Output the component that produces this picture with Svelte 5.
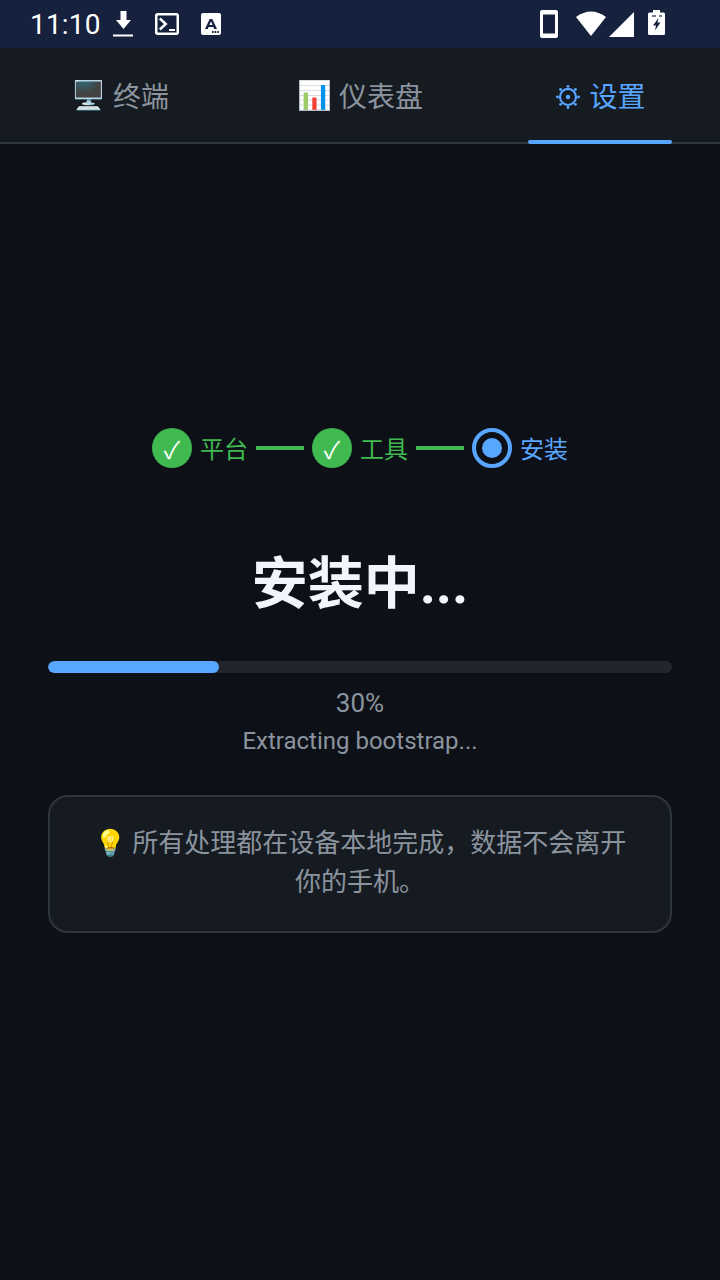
<script>
	const tabs = [
		{ icon: '🖥️', label: '终端' },
		{ icon: '📊', label: '仪表盘' },
		{ label: '设置', active: true }
	];
	const steps = [
		{ label: '平台', state: 'done' },
		{ label: '工具', state: 'done' },
		{ label: '安装', state: 'current' }
	];
	let progress = 30;
	let barWidth = 27.4;
	// knobs round the gear
	const knobs = [0, 1, 2, 3, 4, 5, 6, 7].map((i) => {
		const a = (i * Math.PI) / 4;
		return { x: 14.5 + 10.9 * Math.cos(a), y: 18 + 10.9 * Math.sin(a) };
	});
</script>

<div class="screen">
	<div class="statusbar">
		<span class="time">11:10</span>
		<svg class="ic download" width="20" height="26" viewBox="0 0 20 26">
			<path fill="#fff" d="M7.500 0h6v9h4.500l-7.500 9-7.500-9h4.500z" />
			<rect x="0" y="23.500" width="20" height="2" fill="#fff" />
		</svg>
		<svg class="ic terminal" width="24" height="22" viewBox="0 0 24 22">
			<rect x="1.250" y="1.250" width="21.500" height="19.500" rx="1.500" fill="none" stroke="#fff" stroke-width="2.500" />
			<path d="M4.800 5.500l6 5.500-6 5.500" fill="none" stroke="#fff" stroke-width="2.400" />
			<rect x="14" y="16" width="6" height="2" fill="#fff" />
		</svg>
		<svg class="ic keyboard" width="20" height="22" viewBox="0 0 20 22">
			<path fill="#fff" d="M2 0h16a2 2 0 0 1 2 2v18a2 2 0 0 1-2 2H2a2 2 0 0 1-2-2V2a2 2 0 0 1 2-2z" />
			<path fill="#16213e" d="M4 16L8.700 6h2.600L16 16h-2.800l-.8-2H7.600l-.8 2zM8.400 12h3.200L10 8.200z" />
			<rect x="11" y="18" width="1.600" height="2" fill="#16213e" />
			<rect x="13.600" y="18" width="1.600" height="2" fill="#16213e" />
			<rect x="16.200" y="18" width="1.600" height="2" fill="#16213e" />
		</svg>
		<div class="spacer"></div>
		<svg class="ic" width="18" height="28" viewBox="0 0 18 28">
			<path fill="#fff" fill-rule="evenodd" d="M2 0h14a2 2 0 0 1 2 2v24a2 2 0 0 1-2 2H2a2 2 0 0 1-2-2V2a2 2 0 0 1 2-2zM3 4.500v19h12v-19z" />
		</svg>
		<svg class="ic wifi" width="30" height="28" viewBox="0 0 30 28">
			<path d="M0 7Q15-4 30 7L15 26z" fill="#fff" />
		</svg>
		<svg class="ic signal" width="25" height="28" viewBox="0 0 25 28">
			<path d="M25 2v25H0z" fill="#fff" />
		</svg>
		<svg class="ic battery" width="17" height="28" viewBox="0 0 17 28">
			<path fill="#fff" d="M5 0h7v2.500h3.500a1.500 1.500 0 0 1 1.500 1.500v19.500a1.500 1.500 0 0 1-1.500 1.500H1.500A1.500 1.500 0 0 1 0 23.500V4a1.500 1.500 0 0 1 1.500-1.500H5z" />
			<rect x="4" y="5" width="4" height="2" fill="#16213e" opacity="0.6" />
			<rect x="11" y="5" width="3" height="2" fill="#16213e" opacity="0.6" />
			<path d="M10.500 8L5 15.500h3l-1 5 5.500-8h-3z" fill="#16213e" />
		</svg>
	</div>

	<nav class="tabs">
		{#each tabs as tab}
			<div class="tab" class:active={tab.active}>
				{#if tab.icon}
					<span>{tab.icon}</span>
				{:else}
					<svg width="28" height="32" viewBox="0 0 29 32">
						<circle cx="14.500" cy="18" r="8.300" fill="none" stroke="#58a6ff" stroke-width="2.200" />
						<circle cx="14.500" cy="18" r="2.300" fill="#58a6ff" />
						{#each knobs as k}
							<circle cx={k.x} cy={k.y} r="1.500" fill="#58a6ff" />
						{/each}
					</svg>
				{/if}
				<span class="tab-label">{tab.label}</span>
			</div>
		{/each}
	</nav>

	<main>
		<div class="stepper">
			{#each steps as step, i}
				{#if i > 0}
					<div class="line"></div>
				{/if}
				<div class="step {step.state}">
					<div class="dot">
						{#if step.state === 'done'}✓{:else}<span class="inner"></span>{/if}
					</div>
					<span class="step-label">{step.label}</span>
				</div>
			{/each}
		</div>

		<h1>安装中...</h1>

		<div class="track">
			<div class="fill" style="width: {barWidth}%"></div>
		</div>
		<div class="percent">{progress}%</div>
		<div class="message">Extracting bootstrap...</div>

		<div class="note">💡 所有处理都在设备本地完成，数据不会离开你的手机。</div>
	</main>
</div>

<style>
	:global(body) {
		background: #0d1117;
	}

	.screen {
		display: flex;
		flex-direction: column;
		height: 1280px;
		overflow: hidden;
		background: #0d1117;
		font-family: Roboto, 'Noto Sans CJK SC', sans-serif;
	}

	.statusbar {
		display: flex;
		align-items: center;
		height: 48px;
		flex: none;
		padding: 0 55px 0 30px;
		box-sizing: border-box;
		background: #16213e;
	}

	.time {
		font-size: 28px;
		letter-spacing: 0.2px;
		color: #fff;
	}

	.ic {
		flex: none;
	}

	.download {
		margin-left: 12px;
	}

	.terminal,
	.keyboard {
		margin-left: 22px;
	}

	.wifi {
		margin-left: 18px;
	}

	.signal {
		margin-left: 3px;
	}

	.battery {
		margin-left: 14px;
	}

	.spacer {
		flex: 1;
	}

	.tabs {
		display: flex;
		height: 96px;
		flex: none;
		box-sizing: border-box;
		background: #161b22;
		border-bottom: 2px solid #30363d;
	}

	.tab {
		flex: 1;
		position: relative;
		display: flex;
		align-items: center;
		justify-content: center;
		gap: 7px;
		font-size: 28px;
		color: #8b949e;
	}

	.tab.active {
		color: #58a6ff;
	}

	.tab.active::after {
		content: '';
		position: absolute;
		left: 20%;
		right: 20%;
		bottom: -2px;
		height: 4px;
		border-radius: 2px;
		background: #58a6ff;
	}

	main {
		display: flex;
		flex-direction: column;
		align-items: center;
		padding: 284px 48px 0;
	}

	.stepper {
		display: flex;
		align-items: center;
		gap: 8px;
	}

	.step {
		display: flex;
		align-items: center;
		gap: 8px;
		font-size: 24px;
	}

	.step-label {
		line-height: 34px;
		padding-top: 3px;
	}

	.step.done {
		color: #3fb950;
	}

	.step.current {
		color: #58a6ff;
	}

	.dot {
		display: flex;
		align-items: center;
		justify-content: center;
		width: 40px;
		height: 40px;
		box-sizing: border-box;
		border-radius: 50%;
	}

	.done .dot {
		background: #3fb950;
		color: #fff;
	}

	.current .dot {
		border: 4px solid #58a6ff;
	}

	.inner {
		width: 20px;
		height: 20px;
		border-radius: 50%;
		background: #58a6ff;
	}

	.line {
		width: 48px;
		height: 4px;
		background: #3fb950;
	}

	h1 {
		margin: 76px 0 0;
		font-size: 56px;
		line-height: 80px;
		font-weight: 700;
		color: #f0f6fc;
	}

	.track {
		align-self: stretch;
		height: 12px;
		margin-top: 37px;
		border-radius: 6px;
		background: #21262d;
		overflow: hidden;
	}

	.fill {
		height: 100%;
		border-radius: 6px;
		background: #58a6ff;
	}

	.percent {
		margin-top: 12px;
		font-size: 26px;
		line-height: 36px;
		color: #8b949e;
	}

	.message {
		margin-top: 2px;
		font-size: 24px;
		line-height: 36px;
		color: #8b949e;
	}

	.note {
		align-self: stretch;
		margin-top: 36px;
		padding: 27px 32px 29px;
		box-sizing: border-box;
		border: 2px solid #30363d;
		border-radius: 20px;
		background: #161b22;
		font-size: 26px;
		line-height: 39px;
		text-align: center;
		color: #8b949e;
	}
</style>
